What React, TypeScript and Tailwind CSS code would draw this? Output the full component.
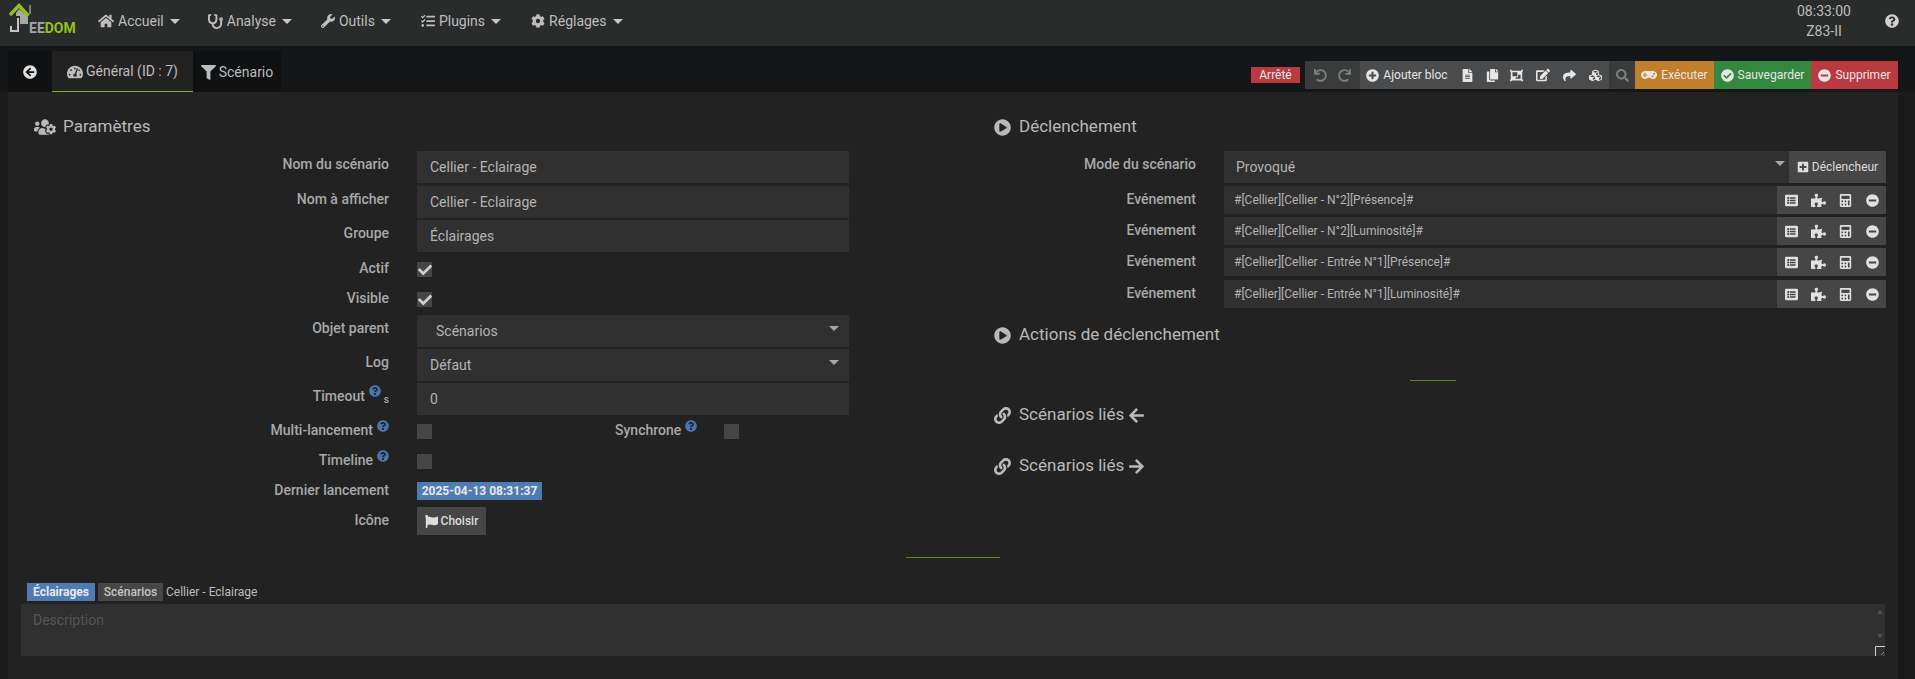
import type { ReactNode } from 'react';
import {
  FaArrowCircleLeft,
  FaArrowLeft,
  FaArrowRight,
  FaCalculator,
  FaCheck,
  FaCheckCircle,
  FaCog,
  FaCopy,
  FaCubes,
  FaEdit,
  FaFileAlt,
  FaFilter,
  FaFlag,
  FaGamepad,
  FaHome,
  FaLink,
  FaListAlt,
  FaMinusCircle,
  FaObjectGroup,
  FaPlayCircle,
  FaPlusCircle,
  FaPlusSquare,
  FaPuzzlePiece,
  FaQuestionCircle,
  FaRedo,
  FaSearch,
  FaShare,
  FaStethoscope,
  FaTachometerAlt,
  FaTasks,
  FaUndo,
  FaUsersCog,
  FaWrench,
} from 'react-icons/fa';

const navItems = [
  { label: 'Accueil', icon: <FaHome className="text-[16px]" />, cls: 'ml-[20px]' },
  { label: 'Analyse', icon: <FaStethoscope className="text-[15px]" />, cls: 'ml-[28px]' },
  { label: 'Outils', icon: <FaWrench className="text-[14px]" />, cls: 'ml-[29px]' },
  { label: 'Plugins', icon: <FaTasks className="text-[14px]" />, cls: 'ml-[30px]' },
  { label: 'Réglages', icon: <FaCog className="text-[14px]" />, cls: 'ml-[30px]' },
];

const events = [
  { text: '#[Cellier][Cellier - N°2][Présence]#', cls: 'mt-[3px]' },
  { text: '#[Cellier][Cellier - N°2][Luminosité]#', cls: 'mt-[3px]' },
  { text: '#[Cellier][Cellier - Entrée N°1][Présence]#', cls: 'mt-[3px]' },
  { text: '#[Cellier][Cellier - Entrée N°1][Luminosité]#', cls: 'mt-[4px]' },
];

const Caret = () => (
  <span className="ml-[6px] inline-block h-0 w-0 border-x-[5px] border-t-[5px] border-x-transparent border-t-[#c8c8c8]" />
);

const Help = () => <FaQuestionCircle className="ml-[4px] -mt-[10px] text-[12px] text-[#4a76b0]" />;

const Label = ({ children }: { children: ReactNode }) => (
  <div className="mb-[2px] flex w-[389px] shrink-0 items-center justify-end text-[14px] font-medium text-[#a9a9a9]">
    {children}
  </div>
);

const Field = ({ value, caret, cls }: { value: string; caret?: boolean; cls?: string }) => (
  <div className="flex h-[32px] w-[432px] items-center justify-between bg-[#303030] pr-[10px] pl-[13px] text-[14px] text-[#b4b4b4]">
    <span className={cls}>{value}</span>
    {caret && <span className="mb-[6px] h-0 w-0 border-x-[5px] border-t-[5px] border-x-transparent border-t-[#a8a8a8]" />}
  </div>
);

const Checkbox = ({ checked }: { checked?: boolean }) => (
  <div className="flex h-[15px] w-[15px] items-center justify-center bg-[#464646]">
    {checked && <FaCheck className="text-[14px] text-[#cfcfcf]" />}
  </div>
);

const Heading = ({ icon, children, cls }: { icon: ReactNode; children: ReactNode; cls?: string }) => (
  <div className={`flex h-[24px] items-center text-[17px] text-[#b9b9b9] ${cls ?? ''}`}>
    <span className="flex w-[25px] shrink-0 items-center text-[17px]">{icon}</span>
    {children}
  </div>
);

const ToolBtn = ({ children, cls }: { children: ReactNode; cls?: string }) => (
  <div className={`flex h-full items-center justify-center ${cls ?? ''}`}>{children}</div>
);

const FormRow = ({ label, cls, children }: { label: string; cls: string; children: ReactNode }) => (
  <div className={`flex h-[32px] items-start ${cls}`}>
    <div className="flex h-[26px] w-[389px] items-center justify-end text-[14px] font-medium text-[#a9a9a9]">{label}</div>
    <div className="ml-[28px]">{children}</div>
  </div>
);

const Row = ({ label, top, children }: { label: ReactNode; top: string; children: ReactNode }) => (
  <div className={`flex h-[15px] items-center ${top}`}>
    <Label>{label}</Label>
    <div className="ml-[28px]">{children}</div>
  </div>
);

const App = () => {
  return (
    <div className="flex h-[679px] w-[1915px] flex-col overflow-hidden bg-[#1a1a1a] font-['Roboto',sans-serif]">
      {/* Navbar */}
      <header className="flex h-[46px] shrink-0 items-start bg-[#2a2c2c] text-[14px] text-[#bdbdbd]">
        <div className="relative mt-[3px] ml-[9px] h-[33px] w-[69px] shrink-0">
          <svg viewBox="0 0 34 33" className="h-[33px] w-[34px]">
            <path d="M20 2 h2 v9 h-2 Z" fill="#7d7d7d" />
            <path d="M10 6 L19 14 V21 H11 V13 H7 V10 Z" fill="#a8a8a8" />
            <path d="M1 12 L10 2.5 L19.5 13" fill="none" stroke="#93c01f" strokeWidth="3.4" />
            <path d="M8 15 h2 v14 H1 v-6 h2 v4 h5 Z" fill="#c4c4c4" />
          </svg>
          <span className="absolute top-[17px] left-[20px] text-[14px] leading-[16px] font-bold text-[#a4a4a4]">
            EE<span className="text-[#93c01f]">DOM</span>
          </span>
        </div>
        <div className="flex h-[42px] items-center">
          {navItems.map((item) => (
            <div key={item.label} className={`flex items-center ${item.cls}`}>
              <span className="mr-[4px]">{item.icon}</span>
              {item.label}
              <Caret />
            </div>
          ))}
        </div>
        <div className="ml-auto flex h-[42px] w-[58px] flex-col items-center justify-center gap-[4px] leading-[16px]">
          <span>08:33:00</span>
          <span>Z83-II</span>
        </div>
        <FaQuestionCircle className="mt-[14px] mr-[16px] ml-[32px] text-[14px] text-[#d0d0d0]" />
      </header>

      {/* Tabs + toolbar */}
      <div className="flex h-[46px] shrink-0 items-end bg-[#151617] pl-[8px]">
        <div className="flex h-[41px] items-stretch bg-[#101112] text-[14px] text-[#bdbdbd]">
          <div className="flex w-[44px] items-center justify-center pt-[1px] text-[#e0e0e0]">
            <FaArrowCircleLeft className="text-[14px]" />
          </div>
          <div className="flex w-[141px] items-center justify-center gap-[3px] border-b border-[#7fb417] bg-[#222222] pt-[1px]">
            <FaTachometerAlt className="text-[16px]" />
            Général (ID : 7)
          </div>
          <div className="flex w-[88px] items-center justify-center gap-[3px] pt-[1px]">
            <FaFilter className="text-[15px]" />
            Scénario
          </div>
        </div>
        <div className="mb-[3px] ml-auto flex h-[28px] items-center pr-[17px] text-[12px] text-[#e6e6e6]">
          <span className="mr-[5px] flex h-[16px] w-[49px] items-center justify-center bg-[#b93a41] text-[12px]">Arrêté</span>
          <div className="flex h-full w-[55px] items-center justify-around bg-[#3a3c3c] px-[3px] text-[13px] text-[#7d7d7d]">
            <FaUndo />
            <FaRedo />
          </div>
          <div className="flex h-full w-[249px] items-center bg-[#4a4b4c] text-[13px]">
            <ToolBtn cls="w-[94px] gap-[4px]">
              <FaPlusCircle />
              <span className="text-[12px]">Ajouter bloc</span>
            </ToolBtn>
            <ToolBtn cls="w-[26px]"><FaFileAlt /></ToolBtn>
            <ToolBtn cls="w-[24px]"><FaCopy /></ToolBtn>
            <ToolBtn cls="w-[24px]"><FaObjectGroup /></ToolBtn>
            <ToolBtn cls="w-[29px]"><FaEdit className="text-[14px]" /></ToolBtn>
            <ToolBtn cls="w-[25px]"><FaShare /></ToolBtn>
            <ToolBtn cls="w-[27px]"><FaCubes /></ToolBtn>
          </div>
          <ToolBtn cls="w-[26px] bg-[#3a3c3c] text-[13px] text-[#7d7d7d]"><FaSearch /></ToolBtn>
          <ToolBtn cls="w-[79px] gap-[4px] bg-[#c17e2b]"><FaGamepad className="text-[16px]" />Exécuter</ToolBtn>
          <ToolBtn cls="w-[97px] gap-[4px] bg-[#33873f]"><FaCheckCircle className="text-[13px]" />Sauvegarder</ToolBtn>
          <ToolBtn cls="w-[87px] gap-[4px] bg-[#b93a41]"><FaMinusCircle className="text-[13px]" />Supprimer</ToolBtn>
        </div>
      </div>

      {/* Panel */}
      <main className="mr-[17px] ml-[8px] flex min-h-0 flex-1 flex-col bg-[#222222]">
        <div className="flex">
          {/* Left column */}
          <section className="w-[986px] shrink-0 pt-[23px]">
            <Heading icon={<FaUsersCog className="text-[22px]" />} cls="ml-[26px] gap-[4px]">Paramètres</Heading>
            <div className="mt-[12px] -ml-[8px] flex flex-col">
              <FormRow label="Nom du scénario" cls="mb-[3px]"><Field value="Cellier - Eclairage" /></FormRow>
              <FormRow label="Nom à afficher" cls="mb-[2px]"><Field value="Cellier - Eclairage" /></FormRow>
              <FormRow label="Groupe" cls="mb-[2px]"><Field value="Éclairages" /></FormRow>
              <Row label="Actif" top="mt-[8px]"><Checkbox checked /></Row>
              <Row label="Visible" top="mt-[15px]"><Checkbox checked /></Row>
              <FormRow label="Objet parent" cls="mt-[8px] mb-[2px]"><Field value="Scénarios" caret cls="ml-[6px]" /></FormRow>
              <FormRow label="Log" cls="mb-[2px]"><Field value="Défaut" caret /></FormRow>
              <div className="flex h-[32px] items-start">
                <div className="flex h-[26px] w-[389px] items-center justify-end text-[14px] font-medium text-[#a9a9a9]">
                  Timeout
                  <Help />
                  <span className="mt-[6px] ml-[3px] text-[10px]">s</span>
                </div>
                <div className="ml-[28px]"><Field value="0" /></div>
              </div>
              <div className="mt-[9px] flex h-[15px] items-center">
                <Label>Multi-lancement<Help /></Label>
                <div className="ml-[28px]"><Checkbox /></div>
                <div className="mb-[2px] ml-[183px] flex w-[93px] items-center text-[14px] font-medium text-[#a9a9a9]">Synchrone<Help /></div>
                <div className="ml-[16px]"><Checkbox /></div>
              </div>
              <Row label={<>Timeline<Help /></>} top="mt-[15px]"><Checkbox /></Row>
              <div className="mt-[13px] flex h-[18px] items-center">
                <Label>Dernier lancement</Label>
                <span className="ml-[28px] flex h-[18px] w-[125px] items-center justify-center bg-[#4f7bb3] text-[12px] font-bold text-[#e8e8e8]">
                  2025-04-13 08:31:37
                </span>
              </div>
              <div className="mt-[7px] flex h-[28px] items-center">
                <Label>Icône</Label>
                <div className="ml-[28px] flex h-[28px] w-[69px] items-center justify-center gap-[3px] bg-[#464646] text-[12px] font-medium text-[#dddddd]">
                  <FaFlag className="text-[13px]" />
                  Choisir
                </div>
              </div>
            </div>
          </section>

          {/* Right column */}
          <section className="min-w-0 flex-1 pt-[23px]">
            <Heading icon={<FaPlayCircle />}>Déclenchement</Heading>
            <div className="mt-[12px] flex h-[32px] items-start">
              <div className="flex h-[26px] w-[202px] items-center justify-end text-[14px] font-medium text-[#a9a9a9]">Mode du scénario</div>
              <div className="ml-[28px] flex h-[32px] w-[662px]">
                <div className="flex flex-1 items-center justify-between bg-[#303030] pr-[4px] pl-[12px] text-[14px] text-[#b4b4b4]">
                  Provoqué
                  <span className="mb-[8px] h-0 w-0 border-x-[5px] border-t-[5px] border-x-transparent border-t-[#a8a8a8]" />
                </div>
                <div className="flex w-[97px] items-center justify-center gap-[3px] bg-[#464646] text-[12px] text-[#dddddd]">
                  <FaPlusSquare className="text-[12px]" />
                  Déclencheur
                </div>
              </div>
            </div>
            {events.map((e) => (
              <div key={e.text} className={`flex h-[28px] items-start ${e.cls}`}>
                <div className="flex h-[26px] w-[202px] items-center justify-end text-[14px] font-medium text-[#a9a9a9]">Evénement</div>
                <div className="ml-[28px] flex h-[28px] w-[662px]">
                  <div className="flex flex-1 items-center bg-[#303030] pl-[10px] text-[12px] text-[#b4b4b4]">{e.text}</div>
                  <div className="flex w-[109px] items-center bg-[#464646] pl-[1px] text-[#e0e0e0]">
                    <ToolBtn cls="w-[27px] text-[13px]"><FaListAlt /></ToolBtn>
                    <ToolBtn cls="w-[27px] text-[15px]"><FaPuzzlePiece /></ToolBtn>
                    <ToolBtn cls="w-[27px] text-[13px]"><FaCalculator /></ToolBtn>
                    <ToolBtn cls="w-[27px] text-[13px]"><FaMinusCircle /></ToolBtn>
                  </div>
                </div>
              </div>
            ))}
            <Heading icon={<FaPlayCircle />} cls="mt-[15px]">Actions de déclenchement</Heading>
            <div className="mt-[33px] ml-[416px] h-px w-[46px] bg-[#5f8a14]" />
            <Heading icon={<FaLink />} cls="mt-[22px]">
              Scénarios liés
              <FaArrowLeft className="ml-[4px] text-[17px]" />
            </Heading>
            <Heading icon={<FaLink />} cls="mt-[27px]">
              Scénarios liés
              <FaArrowRight className="ml-[4px] text-[17px]" />
            </Heading>
          </section>
        </div>

        {/* Bottom */}
        <div className="mt-[22px] ml-[898px] h-px w-[94px] bg-[#5f8a14]" />
        <div className="mt-[25px] ml-[19px] flex h-[18px] items-center gap-[3px] text-[12px]">
          <span className="flex h-[18px] w-[68px] items-center justify-center bg-[#4f7bb3] font-bold text-[#e8e8e8]">Éclairages</span>
          <span className="flex h-[18px] w-[65px] items-center justify-center bg-[#464646] font-medium text-[#c4c4c4]">Scénarios</span>
          <span className="text-[#bdbdbd]">Cellier - Eclairage</span>
        </div>
        <div className="mx-[13px] mt-[3px] flex h-[52px] justify-between bg-[#303030] pt-[6px] pl-[12px] text-[14px] text-[#555555]">
          Description
          <div className="flex w-[10px] flex-col items-center">
            <span className="mb-[20px] h-0 w-0 border-x-[3px] border-b-[4px] border-x-transparent border-b-[#505050]" />
            <span className="h-0 w-0 border-x-[3px] border-t-[4px] border-x-transparent border-t-[#505050]" />
            <svg viewBox="0 0 10 10" className="mt-[8px] h-[10px] w-[10px]">
              <path d="M0.5 10 V0.5 H10" fill="none" stroke="#d0d0d0" />
              <path d="M6 9 L9 6 M8.5 9.5 L9.5 8.5" stroke="#8a8a8a" />
            </svg>
          </div>
        </div>
      </main>
    </div>
  );
};

export default App;
